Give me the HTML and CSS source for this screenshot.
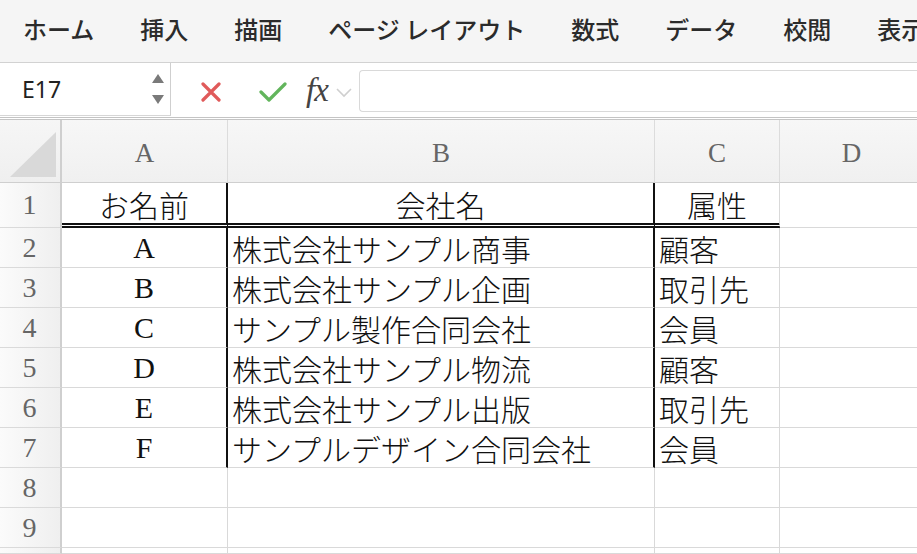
FILE: index.html
```html
<!DOCTYPE html>
<html lang="ja">
<head>
    <meta charset="UTF-8">
    <meta name="viewport" content="width=device-width, initial-scale=1.0">
    <title>Book1</title>
    <link rel="stylesheet" href="styles.css">
</head>
<body>
    <!-- リボンのタブ -->
    <div class="ribbon">
        <span class="tab">ホーム</span>
        <span class="tab">挿入</span>
        <span class="tab">描画</span>
        <span class="tab">ページ レイアウト</span>
        <span class="tab">数式</span>
        <span class="tab">データ</span>
        <span class="tab">校閲</span>
        <span class="tab">表示</span>
    </div>

    <!-- 数式バー -->
    <div class="formula-bar">
        <div class="name-box">
            <span class="cell-ref">E17</span>
            <svg class="spin" width="14" height="32" viewBox="0 0 14 32">
                <polygon points="7,1 13,10 1,10" fill="#7a7a7a"/>
                <polygon points="1,22 13,22 7,31" fill="#7a7a7a"/>
            </svg>
        </div>
        <div class="fb-buttons">
            <svg class="fb-cancel" width="20" height="20" viewBox="0 0 20 20">
                <path d="M2 2 L18 18 M18 2 L2 18" stroke="#e05a5a" stroke-width="3.2" stroke-linecap="round"/>
            </svg>
            <svg class="fb-enter" width="28" height="20" viewBox="0 0 28 20">
                <path d="M2 10 L10 18 L26 2" stroke="#62b55c" stroke-width="3.2" fill="none" stroke-linecap="round" stroke-linejoin="round"/>
            </svg>
            <span class="fx">fx</span>
            <svg class="fb-chevron" width="16" height="10" viewBox="0 0 16 10">
                <path d="M1 1 L8 8 L15 1" stroke="#cfcfcf" stroke-width="1.6" fill="none"/>
            </svg>
        </div>
        <div class="fb-input"></div>
    </div>

    <!-- シート -->
    <div class="sheet">
        <div class="corner"><span class="corner-tri"></span></div>
        <div class="col-head">A</div>
        <div class="col-head">B</div>
        <div class="col-head">C</div>
        <div class="col-head">D</div>

        <div class="row-head">1</div>
        <div class="cell title edge center">お名前</div>
        <div class="cell title edge center">会社名</div>
        <div class="cell title center">属性</div>
        <div class="cell"></div>

        <div class="row-head">2</div>
        <div class="cell edge center">A</div>
        <div class="cell edge">株式会社サンプル商事</div>
        <div class="cell">顧客</div>
        <div class="cell"></div>

        <div class="row-head">3</div>
        <div class="cell edge center">B</div>
        <div class="cell edge">株式会社サンプル企画</div>
        <div class="cell">取引先</div>
        <div class="cell"></div>

        <div class="row-head">4</div>
        <div class="cell edge center">C</div>
        <div class="cell edge">サンプル製作合同会社</div>
        <div class="cell">会員</div>
        <div class="cell"></div>

        <div class="row-head">5</div>
        <div class="cell edge center">D</div>
        <div class="cell edge">株式会社サンプル物流</div>
        <div class="cell">顧客</div>
        <div class="cell"></div>

        <div class="row-head">6</div>
        <div class="cell edge center">E</div>
        <div class="cell edge">株式会社サンプル出版</div>
        <div class="cell">取引先</div>
        <div class="cell"></div>

        <div class="row-head">7</div>
        <div class="cell edge center">F</div>
        <div class="cell edge">サンプルデザイン合同会社</div>
        <div class="cell">会員</div>
        <div class="cell"></div>

        <div class="row-head">8</div>
        <div class="cell"></div>
        <div class="cell"></div>
        <div class="cell"></div>
        <div class="cell"></div>

        <div class="row-head">9</div>
        <div class="cell"></div>
        <div class="cell"></div>
        <div class="cell"></div>
        <div class="cell"></div>

        <div class="row-head"></div>
        <div class="cell"></div>
        <div class="cell"></div>
        <div class="cell"></div>
        <div class="cell"></div>
    </div>
</body>
</html>
```

FILE: styles.css
```css
* {
    box-sizing: border-box;
}

body {
    margin: 0;
    width: 917px;
    height: 554px;
    overflow: hidden;
    background: #ffffff;
    font-family: "Noto Sans CJK JP", "Noto Sans", sans-serif;
}

/* リボン */
.ribbon {
    height: 63px;
    background-color: #f5f5f5;
    border-bottom: 1px solid #d2d2d2;
    display: flex;
    align-items: center;
    gap: 46px;
    padding-left: 23px;
    white-space: nowrap;
    overflow: hidden;
}

.tab {
    font-size: 24px;
    font-weight: 500;
    color: #2b2b2b;
    line-height: 1;
    padding-bottom: 4px;
}

/* 数式バー */
.formula-bar {
    height: 57px;
    display: flex;
    align-items: stretch;
    border-bottom: 3px double #c4c4c4;
    background: #ffffff;
}

.name-box {
    width: 171px;
    border-right: 1px solid #cfcfcf;
    border-bottom: 1px solid #d6d6d6;
    margin-bottom: 1px;
    display: flex;
    align-items: center;
    justify-content: space-between;
    padding: 0 5px 0 22px;
}

.cell-ref {
    font-family: "Noto Sans", sans-serif;
    font-size: 23px;
    color: #222;
}

.fb-buttons {
    display: flex;
    align-items: center;
    padding-left: 30px;
}

.fb-cancel {
    margin-top: 4px;
}

.fb-enter {
    margin-left: 38px;
    margin-top: 3px;
}

.fx {
    font-family: "Liberation Serif", serif;
    font-style: italic;
    font-size: 33px;
    color: #444;
    margin-left: 19px;
    letter-spacing: -1px;
}

.fb-chevron {
    margin-left: 8px;
    margin-top: 6px;
}

.fb-input {
    flex: 1;
    margin: 7px 0 5px 7px;
    border: 1px solid #d9d9d9;
    border-right: none;
    border-radius: 4px 0 0 4px;
}

/* シート */
.sheet {
    display: grid;
    grid-template-columns: 62px 166px 427px 125px 144px;
    grid-template-rows: 63px 45px repeat(8, 40px) 6px;
}

.corner {
    background: linear-gradient(#f6f6f6, #efefef);
    border-right: 2px solid #cfcfcf;
    border-bottom: 1px solid #cfcfcf;
    display: flex;
    align-items: flex-end;
    justify-content: flex-end;
    padding: 0 4px 5px 0;
}

.corner-tri {
    width: 0;
    height: 0;
    border-left: 46px solid transparent;
    border-bottom: 45px solid #d9d9d9;
}

.col-head {
    background: linear-gradient(#f7f7f7, #f0f0f0);
    border-right: 1px solid #dcdcdc;
    border-bottom: 1px solid #cfcfcf;
    display: flex;
    align-items: center;
    justify-content: center;
    font-family: "Liberation Serif", serif;
    font-size: 27px;
    color: #666;
    padding-top: 4px;
}

.row-head {
    background: linear-gradient(90deg, #fbfbfb, #efefef);
    border-right: 2px solid #cfcfcf;
    border-bottom: 1px solid #dadada;
    display: flex;
    align-items: center;
    justify-content: center;
    font-family: "Liberation Serif", serif;
    font-size: 28px;
    color: #666;
    padding-right: 1px;
}

.cell {
    border-right: 1px solid #d9d9d9;
    border-bottom: 1px solid #d9d9d9;
    display: flex;
    align-items: center;
    padding-left: 4px;
    font-family: "Liberation Serif", "Noto Sans CJK JP", serif;
    font-size: 30px;
    font-weight: 300;
    color: #111;
    white-space: nowrap;
    overflow: hidden;
}

.cell.center {
    justify-content: center;
    padding-left: 0;
}

.cell.edge {
    border-right: 2px solid #111;
}

.cell.title {
    border-bottom: 5px double #111;
    padding-top: 2px;
}
```
